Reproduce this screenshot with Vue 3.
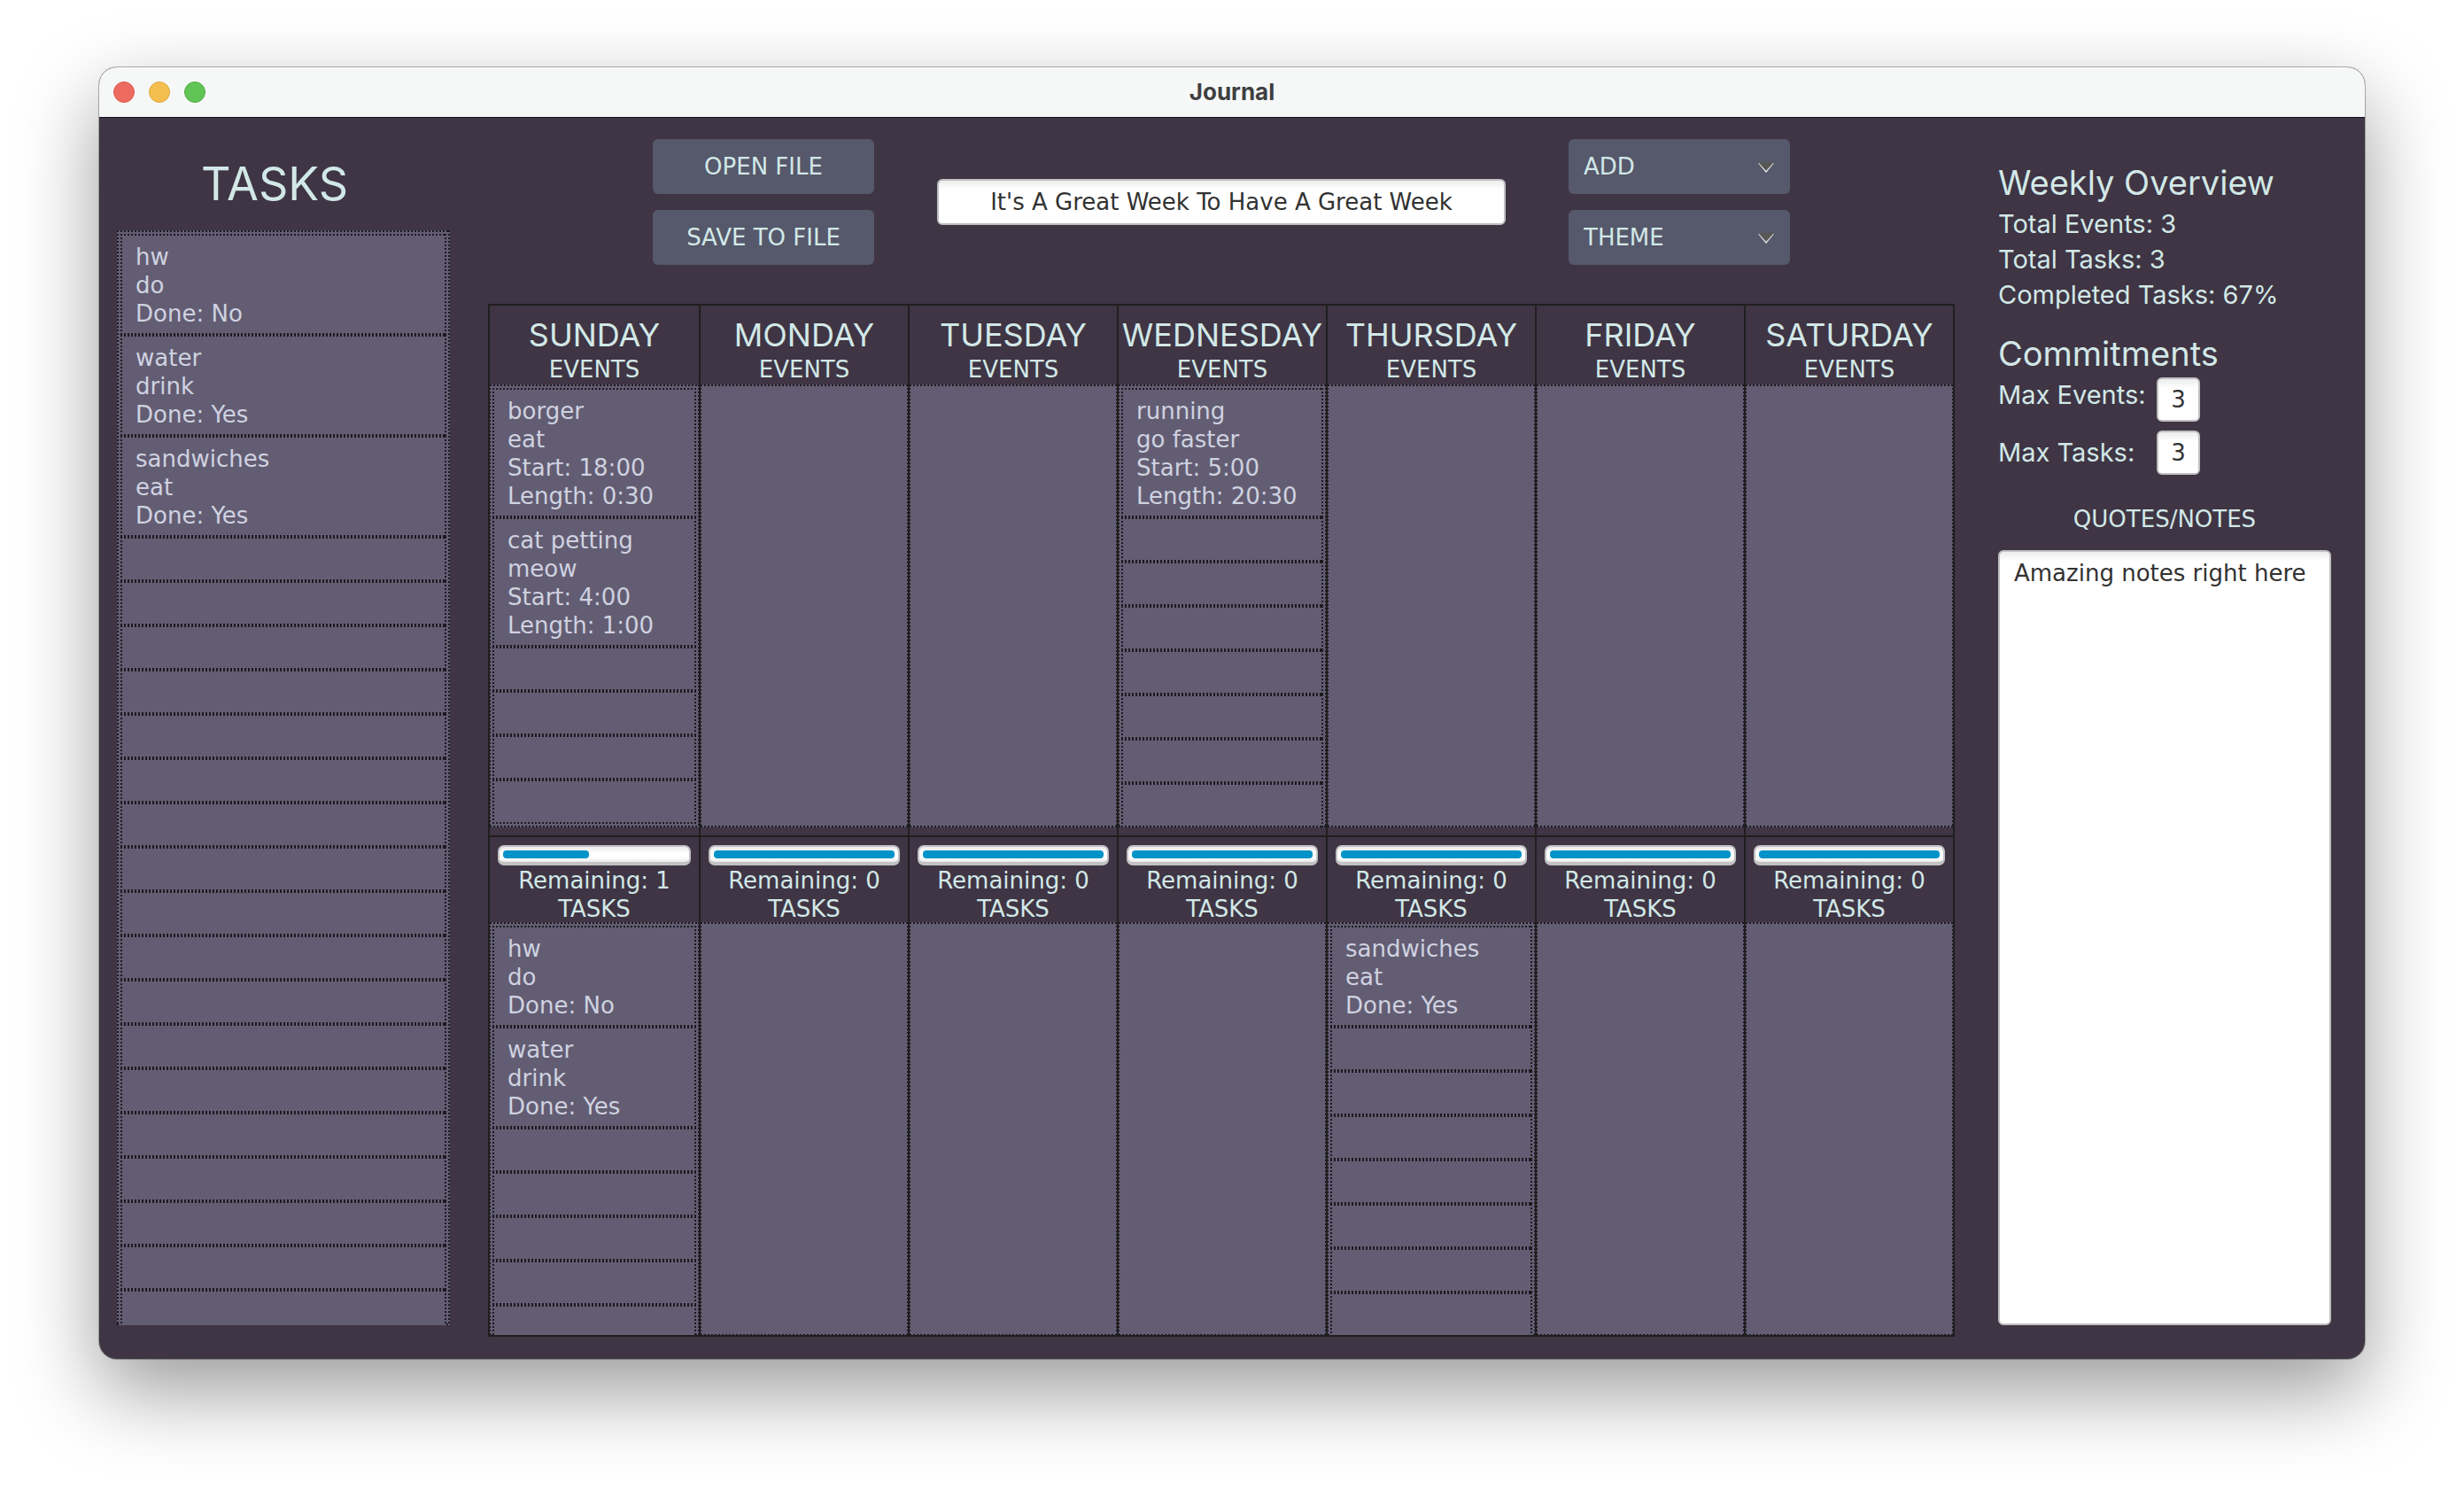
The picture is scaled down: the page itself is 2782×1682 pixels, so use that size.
<script setup>
import { ref } from 'vue'

const weekTitle = ref("It's A Great Week To Have A Great Week")
const notes = ref('Amazing notes right here')
const maxEvents = ref('3')
const maxTasks = ref('3')

const hw = ['hw', 'do', 'Done: No']
const water = ['water', 'drink', 'Done: Yes']
const sandwiches = ['sandwiches', 'eat', 'Done: Yes']

const blank = (count) => Array.from({ length: count }, () => [])

const allTasks = [hw, water, sandwiches, ...blank(18)]

const days = [
  {
    name: 'SUNDAY',
    events: [
      ['borger', 'eat', 'Start: 18:00', 'Length: 0:30'],
      ['cat petting', 'meow', 'Start: 4:00', 'Length: 1:00'],
      ...blank(4),
    ],
    progress: 0.5,
    remaining: 1,
    tasks: [hw, water, ...blank(5)],
  },
  { name: 'MONDAY', events: [], progress: 1, remaining: 0, tasks: [] },
  { name: 'TUESDAY', events: [], progress: 1, remaining: 0, tasks: [] },
  {
    name: 'WEDNESDAY',
    events: [['running', 'go faster', 'Start: 5:00', 'Length: 20:30'], ...blank(7)],
    progress: 1,
    remaining: 0,
    tasks: [],
  },
  { name: 'THURSDAY', events: [], progress: 1, remaining: 0, tasks: [sandwiches, ...blank(7)] },
  { name: 'FRIDAY', events: [], progress: 1, remaining: 0, tasks: [] },
  { name: 'SATURDAY', events: [], progress: 1, remaining: 0, tasks: [] },
]
</script>

<template>
  <div class="desktop">
    <div class="window">
      <header class="titlebar">
        <div class="lights">
          <button class="light close" aria-label="Close"></button>
          <button class="light minimize" aria-label="Minimize"></button>
          <button class="light maximize" aria-label="Zoom"></button>
        </div>
        <span class="title">Journal</span>
      </header>

      <main class="body">
        <section class="queue">
          <h1>TASKS</h1>
          <ul class="list dots">
            <li v-for="(item, i) in allTasks" :key="i" class="cell dots">
              <p v-for="line in item" :key="line">{{ line }}</p>
            </li>
          </ul>
        </section>

        <section class="center">
          <div class="toolbar">
            <div class="stack">
              <button class="action">OPEN FILE</button>
              <button class="action">SAVE TO FILE</button>
            </div>
            <input v-model="weekTitle" class="field week-title" type="text" aria-label="Week title" />
            <div class="stack">
              <div v-for="menu in ['ADD', 'THEME']" :key="menu" class="menu">
                <select class="action" :aria-label="menu">
                  <option>{{ menu }}</option>
                </select>
                <svg class="arrow" viewBox="0 0 18 12" aria-hidden="true">
                  <path d="M0 1H18L9 12Z" fill="#f4f4f4" />
                  <path d="M0 0H18L9 10Z" fill="#585956" />
                </svg>
              </div>
            </div>
          </div>

          <div class="week">
            <article v-for="day in days" :key="day.name" class="day">
              <header class="day-head">
                <h2>{{ day.name }}</h2>
                <h3>EVENTS</h3>
              </header>
              <ul class="list dots events">
                <li v-for="(item, i) in day.events" :key="i" class="cell dots">
                  <p v-for="line in item" :key="line">{{ line }}</p>
                </li>
              </ul>
              <header class="task-head">
                <div
                  class="bar"
                  role="progressbar"
                  aria-label="Completed tasks"
                  :aria-valuenow="day.progress * 100"
                >
                  <div class="fill" :style="{ width: `calc((100% + 12px) * ${day.progress} - 12px)` }"></div>
                </div>
                <p>Remaining: {{ day.remaining }}</p>
                <h3>TASKS</h3>
              </header>
              <ul class="list dots tasks">
                <li v-for="(item, i) in day.tasks" :key="i" class="cell dots">
                  <p v-for="line in item" :key="line">{{ line }}</p>
                </li>
              </ul>
            </article>
          </div>
        </section>

        <aside class="side">
          <h2>Weekly Overview</h2>
          <p>Total Events: 3</p>
          <p>Total Tasks: 3</p>
          <p>Completed Tasks: 67%</p>
          <h2 class="commitments">Commitments</h2>
          <div class="limits">
            <label class="first" for="max-events">Max Events:</label>
            <input id="max-events" v-model="maxEvents" class="field" type="text" />
            <label for="max-tasks">Max Tasks:</label>
            <input id="max-tasks" v-model="maxTasks" class="field" type="text" />
          </div>
          <label class="notes-label" for="notes">QUOTES/NOTES</label>
          <textarea id="notes" v-model="notes" class="field notes"></textarea>
        </aside>
      </main>
    </div>
  </div>
</template>

<style>
body {
  background: #fff;
}
</style>

<style scoped>
.desktop,
.desktop * {
  box-sizing: border-box;
}

.desktop {
  display: flex;
  height: 100vh;
  min-height: 1200px;
  padding: 76px 112px 148px;
  font: 26px/32px 'DejaVu Sans', Verdana, sans-serif;
  color: #d2e8e7;
}

h1,
h2,
h3,
p,
ul {
  margin: 0;
  padding: 0;
  font-weight: 400;
}

ul {
  list-style: none;
}

h1,
h2,
.title,
.side p,
.limits label {
  font-family: Inter, sans-serif;
}

button,
input,
select,
textarea {
  margin: 0;
  font: inherit;
}

.window {
  display: flex;
  flex: 1;
  flex-direction: column;
  min-width: 0;
  overflow: hidden;
  background: #3f3544;
  border-radius: 20px;
  box-shadow:
    0 0 0 1px rgba(0, 0, 0, 0.28),
    0 36px 92px rgba(0, 0, 0, 0.4);
}

.titlebar {
  display: grid;
  grid-template-columns: 1fr auto 1fr;
  align-items: center;
  height: 57px;
  padding: 0 16px;
  background: #f6f8f7;
  border-bottom: 1px solid #1c1322;
}

.lights {
  display: flex;
  gap: 16px;
}

.light {
  width: 24px;
  height: 24px;
  padding: 0;
  border: 1px solid;
  border-radius: 50%;
}

.close {
  background: #ed6a5f;
  border-color: #d85a50;
}

.minimize {
  background: #f5bf4f;
  border-color: #dba63f;
}

.maximize {
  background: #61c555;
  border-color: #50ac44;
}

.title {
  font-size: 26px;
  font-weight: 700;
  color: #3f3f41;
}

.body {
  display: grid;
  flex: 1;
  grid-template-columns: 376px minmax(0, 1fr) 376px;
  grid-template-rows: minmax(0, 1fr);
  min-height: 0;
  padding: 0 38px 0 20px;
}

/* Square 2px dots along the four edges */
.dots {
  --edge: 2px;
  --across: repeating-linear-gradient(90deg, #1d1a20 0 2px, transparent 2px 4px);
  --down: repeating-linear-gradient(180deg, #1d1a20 0 2px, transparent 2px 4px);
  background:
    var(--across) top / 100% 2px no-repeat,
    var(--across) bottom / 100% var(--bottom, 2px) no-repeat,
    var(--down) left / var(--edge) 100% no-repeat,
    var(--down) right / var(--edge) 100% no-repeat,
    #635d73;
}

.list {
  flex: 1 1 0;
  min-height: 0;
  overflow: hidden;
  padding: 4px;
  color: #cfd2e0;
}

.cell {
  min-height: 50px;
  padding: 10px 17px 8px;
}

.queue {
  display: flex;
  flex-direction: column;
  padding: 42px 0 38px;
}

h1 {
  margin-bottom: 19px;
  padding-right: 20px;
  font-size: 52px;
  line-height: 66px;
  text-align: center;
}

.center {
  display: flex;
  flex-direction: column;
  min-height: 0;
  margin: 0 49px 0 43px;
  padding: 24px 0 25px;
}

.toolbar {
  display: flex;
  justify-content: center;
  gap: 71px;
  align-items: center;
  margin-bottom: 44px;
}

.stack {
  display: flex;
  flex-direction: column;
  gap: 18px;
}

.action {
  width: 250px;
  height: 62px;
  padding: 0 17px;
  color: inherit;
  background: #56586b;
  border: 0;
  border-radius: 6px;
}

.menu {
  position: relative;
  display: flex;
}

select.action {
  appearance: none;
}

.arrow {
  position: absolute;
  top: 26px;
  right: 18px;
  width: 18px;
  height: 12px;
  pointer-events: none;
}

.field {
  padding: 0;
  color: #323232;
  text-align: center;
  background: linear-gradient(#ececec, #fff 10px);
  border: 2px solid #c0bfc1;
  border-radius: 6px;
  outline: 0;
}

.week-title {
  width: 642px;
  height: 52px;
}

.week {
  display: grid;
  flex: 1;
  grid-template-columns: 238fr repeat(6, 236fr);
  grid-template-rows: minmax(0, 1fr);
  min-height: 0;
  border: 2px solid #201f20;
  border-right: 0;
}

.day {
  display: flex;
  flex-direction: column;
  min-width: 0;
  border-right: 2px solid #201f20;
}

.day .list {
  --edge: 1px;
  padding: 4px 3px;
}

.day .cell {
  --edge: 2px;
}

.day .events {
  flex-grow: 500;
}

.day .tasks {
  --bottom: 1px;
  flex-grow: 466;
}

.day .tasks .cell {
  --bottom: 2px;
}

.day-head {
  padding-top: 12px;
  text-align: center;
}

.day-head h2 {
  font-size: 36px;
  line-height: 43px;
  white-space: nowrap;
}

h3 {
  font-size: 26px;
}

.day-head h3 {
  line-height: 34px;
}

.task-head {
  margin-top: 9px;
  padding: 9px 9px 0;
  text-align: center;
  border-top: 2px solid #201f20;
}

.task-head p {
  line-height: 34px;
}

.task-head h3 {
  line-height: 30px;
}

.bar {
  height: 23px;
  padding: 4px;
  background: linear-gradient(#ececec, #fff 8px, #fff 12px, #e8e8e8);
  border: 2px solid #c2c1c3;
  border-bottom-width: 4px;
  border-radius: 7px;
}

.fill {
  height: 9px;
  background: #0093c8;
  border-radius: 4px;
}

.side {
  display: flex;
  flex-direction: column;
  padding: 50px 0 38px;
}

.side h2 {
  margin-bottom: 3px;
  font-size: 38px;
  line-height: 47px;
}

.side p,
.limits label {
  font-size: 29px;
  line-height: 40px;
}

.side .commitments {
  margin-top: 23px;
}

.limits {
  display: grid;
  grid-template-columns: 179px 49px;
  row-gap: 10px;
  align-items: center;
}

.limits .first {
  align-self: start;
}

.limits .field {
  width: 49px;
  height: 50px;
}

.notes-label {
  margin: 34px 0 19px;
  text-align: center;
}

.notes {
  flex: 1;
  width: 100%;
  min-height: 0;
  padding: 8px 16px;
  text-align: left;
  resize: none;
}
</style>
